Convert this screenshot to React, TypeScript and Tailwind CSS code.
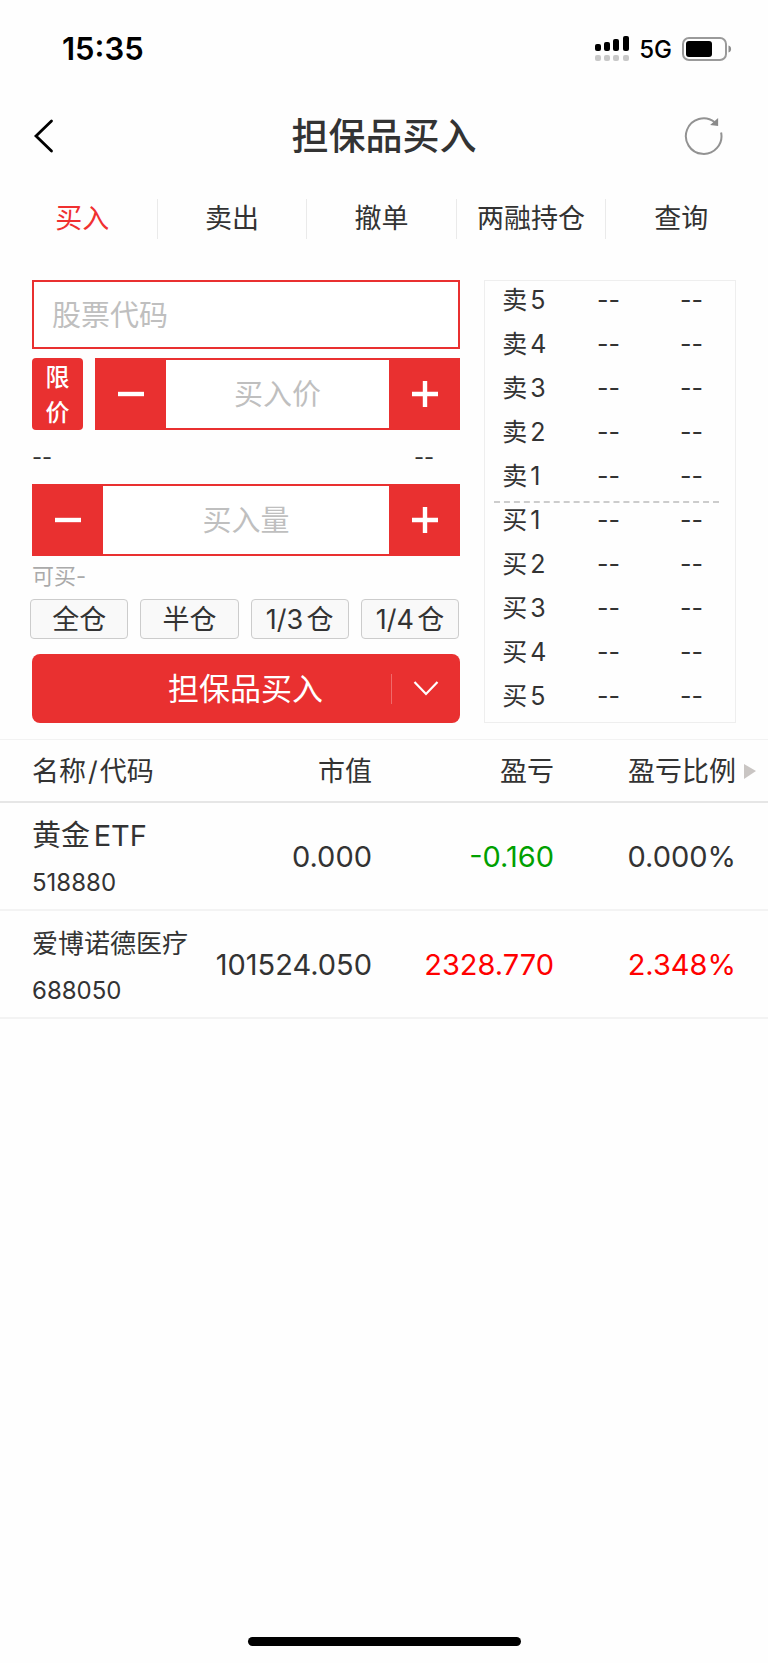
import { useState } from "react";

const tabs = ["买入", "卖出", "撤单", "两融持仓", "查询"];

const asks = ["卖5", "卖4", "卖3", "卖2", "卖1"];
const bids = ["买1", "买2", "买3", "买4", "买5"];

const portions = ["全仓", "半仓", "1/3仓", "1/4仓"];

const holdings = [
  {
    name: "黄金ETF",
    nameSize: "text-[29px]",
    code: "518880",
    value: "0.000",
    profit: "-0.160",
    profitColor: "text-[#00a000]",
    ratio: "0.000%",
    ratioColor: "",
  },
  {
    name: "爱博诺德医疗",
    nameSize: "text-[26px]",
    code: "688050",
    value: "101524.050",
    profit: "2328.770",
    profitColor: "text-[#ff0000]",
    ratio: "2.348%",
    ratioColor: "text-[#ff0000]",
  },
];

function StatusBar() {
  return (
    <div className="flex h-[98px] items-center justify-between pl-[62px] pr-9 text-black">
      <span className="text-[31px] font-semibold leading-9">15:35</span>
      <div className="flex items-center gap-[10px]">
        <svg width="34" height="26" viewBox="0 0 34 26" aria-hidden="true">
          <rect x="0" y="8" width="6" height="7" rx="2" />
          <rect x="9" y="6" width="6" height="9" rx="2" />
          <rect x="18" y="3" width="6" height="12" rx="2" />
          <rect x="28" y="0" width="6" height="15" rx="2" />
          <g fill="#c8c8c8">
            <rect x="0" y="19" width="6" height="6" rx="2" />
            <rect x="9" y="19" width="6" height="6" rx="2" />
            <rect x="18" y="19" width="6" height="6" rx="2" />
            <rect x="28" y="19" width="6" height="6" rx="2" />
          </g>
        </svg>
        <span className="pt-0.5 text-2xl font-medium">5G</span>
        <svg width="50" height="24" viewBox="0 0 50 24" aria-hidden="true">
          <rect
            x="1"
            y="1"
            width="43"
            height="22"
            rx="6"
            fill="none"
            stroke="#9a9a9a"
            strokeWidth="2"
          />
          <rect x="4" y="4" width="26" height="16" rx="3" />
          <path d="M46.5 8.5c1.7.5 2.6 1.8 2.6 3.5s-.9 3-2.6 3.5z" fill="#8c8c8c" />
        </svg>
      </div>
    </div>
  );
}

function Stepper({ label }: { label: string }) {
  const [value, setValue] = useState("");

  function step(delta: number) {
    setValue(String(Math.max(0, Number(value || 0) + delta)));
  }

  return (
    <div className="flex h-[72px] min-w-0 flex-1 bg-[#e93030]">
      <button
        type="button"
        aria-label={`${label}减`}
        onClick={() => step(-1)}
        className="flex w-[71px] shrink-0 items-center justify-center"
      >
        <svg width="26" height="26" viewBox="0 0 26 26" stroke="#fff" strokeWidth="4.4">
          <path d="M0 13h26" />
        </svg>
      </button>
      <input
        aria-label={label}
        placeholder={label}
        value={value}
        onChange={(e) => setValue(e.target.value)}
        className="my-0.5 min-w-0 flex-1 bg-white pt-0.5 text-center text-[29px] outline-none placeholder:text-[#bfbfbf]"
      />
      <button
        type="button"
        aria-label={`${label}加`}
        onClick={() => step(1)}
        className="flex w-[71px] shrink-0 items-center justify-center"
      >
        <svg width="26" height="26" viewBox="0 0 26 26" stroke="#fff" strokeWidth="4.4">
          <path d="M0 13h26M13 0v26" />
        </svg>
      </button>
    </div>
  );
}

function OrderForm() {
  return (
    <form onSubmit={(e) => e.preventDefault()} className="min-w-0">
      <input
        aria-label="股票代码"
        placeholder="股票代码"
        className="block h-[69px] w-full border-2 border-[#e93030] bg-white px-[18px] pt-0.5 text-[29px] outline-none placeholder:text-[#bfbfbf]"
      />
      <div className="mt-[9px] flex gap-3">
        <button
          type="button"
          className="h-[72px] w-[51px] shrink-0 rounded bg-[#e93030] px-3 pt-0.5 text-2xl font-medium leading-[35px] text-white"
        >
          限价
        </button>
        <Stepper label="买入价" />
      </div>
      <div className="flex h-[54px] items-center justify-between pr-[26px] text-[22px]">
        <span>--</span>
        <span>--</span>
      </div>
      <Stepper label="买入量" />
      <p className="h-[43px] text-[22px] leading-10 text-[#aaa]">可买-</p>
      <div className="-ml-0.5 mr-px grid grid-cols-4 gap-3">
        {portions.map((portion) => (
          <button
            key={portion}
            type="button"
            className="h-10 rounded border border-[#ccc] bg-[#f9f9f9] pt-0.5 text-[27px] leading-9"
          >
            {portion}
          </button>
        ))}
      </div>
      <div className="mt-[15px] flex h-[69px] items-center rounded-lg bg-[#e93030] text-white">
        <button type="submit" className="h-full flex-1 pl-[68px] pt-0.5 text-[31px]">
          担保品买入
        </button>
        <button
          type="button"
          aria-label="更多"
          className="flex h-[30px] w-[69px] items-center justify-center border-l border-[#f06a6a]"
        >
          <svg
            width="26"
            height="16"
            viewBox="0 0 26 16"
            fill="none"
            stroke="currentColor"
            strokeWidth="2.2"
          >
            <path d="M1.5 1L13 13L24.5 1" />
          </svg>
        </button>
      </div>
    </form>
  );
}

function QuoteTable({ quotes }: { quotes: string[] }) {
  return (
    <table className="w-full table-fixed border-collapse">
      <tbody>
        {quotes.map((quote) => (
          <tr key={quote} className="h-11">
            <th scope="row" className="w-[28%] pb-1.5 pl-2 text-left font-normal leading-8">
              {quote}
            </th>
            <td className="w-[28%] pb-1.5 text-right leading-8">--</td>
            <td className="pb-1.5 pr-4 text-right leading-8">--</td>
          </tr>
        ))}
      </tbody>
    </table>
  );
}

function OrderBook() {
  return (
    <div className="border border-[#eee] pl-[9px] pr-4 text-[25px]">
      <QuoteTable quotes={asks} />
      <div className="-mb-0.5 border-t-2 border-dashed border-[#ccc]" />
      <QuoteTable quotes={bids} />
    </div>
  );
}

function Holdings() {
  return (
    <table className="mt-4 w-full table-fixed border-collapse">
      <thead>
        <tr className="h-[62px] border-b-2 border-t border-b-[#e6e6e6] border-t-[#f2f2f2] text-[27px]">
          <th className="pl-8 pt-1 text-left font-normal">
            名称<span className="px-0.5">/</span>代码
          </th>
          <th className="w-[168px] pt-1 text-right font-normal">市值</th>
          <th className="w-[182px] pt-1 text-right font-normal">盈亏</th>
          <th className="w-[214px] pr-3 pt-1 font-normal">
            <div className="flex items-center justify-end gap-2">
              盈亏比例
              <svg width="12" height="16" viewBox="0 0 12 16" fill="#c9c5c3" aria-hidden="true">
                <path d="M0 0l12 7l-12 8z" />
              </svg>
            </div>
          </th>
        </tr>
      </thead>
      <tbody>
        {holdings.map((item) => (
          <tr key={item.code} className="border-b-2 border-[#f3f3f3] text-[29px]">
            <td className="whitespace-nowrap pb-[3px] pl-8 pt-[9px]">
              <div className={`${item.nameSize} leading-[47px]`}>{item.name}</div>
              <div className="text-2xl leading-[47px]">{item.code}</div>
            </td>
            <td className="pt-0.5 text-right">{item.value}</td>
            <td className={`pt-0.5 text-right ${item.profitColor}`}>{item.profit}</td>
            <td className={`pr-8 pt-0.5 text-right ${item.ratioColor}`}>{item.ratio}</td>
          </tr>
        ))}
      </tbody>
    </table>
  );
}

export default function App() {
  const [active, setActive] = useState("买入");

  return (
    <main className="flex min-h-screen flex-col bg-[#fefefe] font-['Inter','Noto_Sans_CJK_SC',sans-serif] text-[#333] [text-autospace:normal]">
      <StatusBar />
      <header className="flex h-[76px] items-center justify-between pl-8 pr-11">
        <button type="button" aria-label="返回" className="w-[52px] text-black">
          <svg
            width="22"
            height="36"
            viewBox="0 0 22 36"
            fill="none"
            stroke="currentColor"
            strokeWidth="2.8"
            strokeLinecap="round"
          >
            <path d="M19.5 3L4 18L19.5 33" />
          </svg>
        </button>
        <h1 className="pt-0.5 text-[37px] font-medium">担保品买入</h1>
        <button type="button" aria-label="刷新" className="flex w-10 justify-end">
          <svg width="40" height="40" viewBox="0.5 0.5 40 40" fill="none">
            <path d="M37.6 17A17.8 17.8 0 1 1 31 6.5" stroke="#929292" strokeWidth="2" />
            <path d="M34.6 2.6V10.6L26.6 9.4z" fill="#8a8a8a" />
          </svg>
        </button>
      </header>
      <nav className="grid grid-cols-5 divide-x divide-[#eaeaea] pb-[23px] pl-2 pr-3 pt-[25px]">
        {tabs.map((tab) => (
          <button
            key={tab}
            type="button"
            onClick={() => setActive(tab)}
            className={
              tab === active
                ? "h-10 whitespace-nowrap text-[27px] text-[#f03030]"
                : "h-10 whitespace-nowrap text-[27px]"
            }
          >
            {tab}
          </button>
        ))}
      </nav>
      <section className="grid grid-cols-[17fr_10fr] gap-6 px-8 pt-[18px]">
        <OrderForm />
        <OrderBook />
      </section>
      <Holdings />
      <div className="mx-auto mb-[17px] mt-auto h-[9px] w-[273px] rounded-full bg-black" />
    </main>
  );
}
